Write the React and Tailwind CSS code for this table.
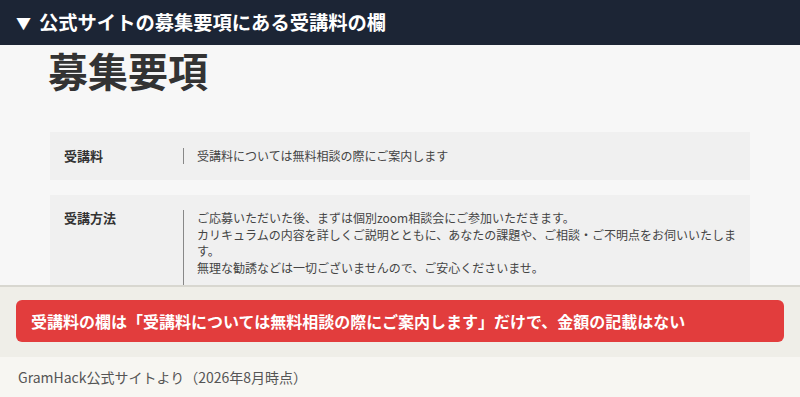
export default function App() {
  const jp = { fontFamily: '"Noto Sans CJK JP", "Noto Sans", sans-serif' };
  return (
    <div className="w-[800px] h-[397px] overflow-hidden flex flex-col bg-[#f7f6f2]" style={jp}>
      <div className="h-[45px] shrink-0 bg-[#1c2535] flex items-center pl-[16px] gap-[8px] text-white font-bold text-[19.3px] leading-none">
        <span className="text-[15px]">▼</span>
        <span>公式サイトの募集要項にある受講料の欄</span>
      </div>
      <div className="h-[242px] shrink-0 bg-[#f7f7f7] overflow-hidden pl-[48px] pr-[50px] border-b-2 border-[#d8d7d0]">
        <h1 className="mt-[1px] h-[48px] text-[40px] leading-[48px] font-bold text-[#333] whitespace-nowrap">募集要項</h1>
        <div className="mt-[38px] ml-[2px] flex flex-col gap-[15px]">
          <div className="h-[48px] bg-[#f0f0f0] flex items-center px-[14px]">
            <div className="w-[119px] shrink-0 text-[13px] font-bold text-[#333]">受講料</div>
            <div className="w-px h-[16px] bg-[#888]"></div>
            <div className="pl-[13px] text-[12px] text-[#444]">受講料については無料相談の際にご案内します</div>
          </div>
          <div className="h-[120px] bg-[#f0f0f0] flex px-[14px] pt-[15px]">
            <div className="w-[119px] shrink-0 text-[13px] font-bold text-[#333] leading-[16.5px]">受講方法</div>
            <div className="border-l border-[#888] pl-[13px] text-[12px] leading-[16.6px] text-[#444]">
              <div className="w-[546px]">
                ご応募いただいた後、まずは個別zoom相談会にご参加いただきます。<br />
                カリキュラムの内容を詳しくご説明とともに、あなたの課題や、ご相談・ご不明点をお伺いいたします。<br />
                無理な勧誘などは一切ございませんので、ご安心くださいませ。
              </div>
            </div>
          </div>
        </div>
      </div>
      <div className="h-[70px] shrink-0 bg-[#efeee8] px-[16px] pt-[13px]">
        <div className="h-[42px] rounded-[6px] bg-[#e23d3d] flex items-center px-[15px] text-white font-bold text-[16px] leading-none">
          受講料の欄は「受講料については無料相談の際にご案内します」だけで、金額の記載はない
        </div>
      </div>
      <div className="flex-1 flex items-center px-[18px] text-[14px] text-[#555] leading-none">
        GramHack公式サイトより（2026年8月時点）
      </div>
    </div>
  );
}
